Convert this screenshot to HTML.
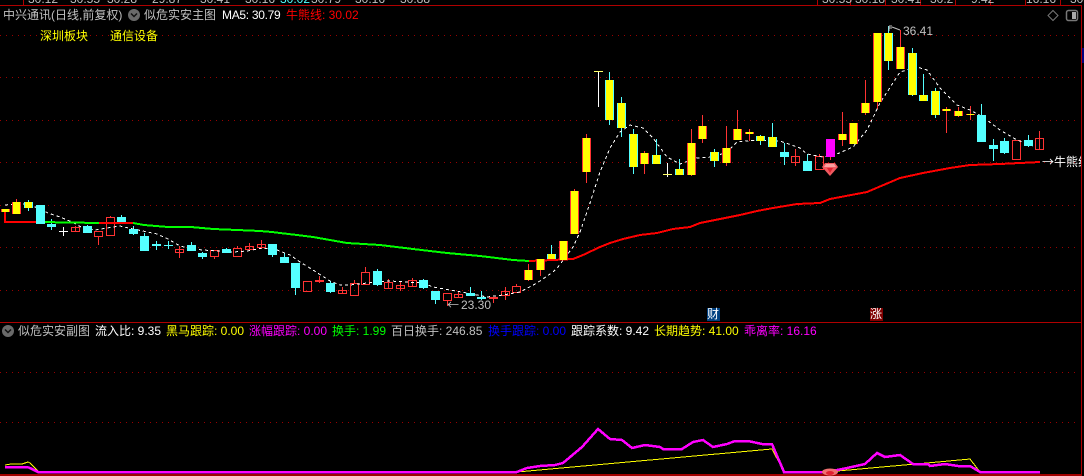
<!DOCTYPE html>
<html><head><meta charset="utf-8"><style>
html,body{margin:0;padding:0;background:#000;width:1084px;height:476px;overflow:hidden}
#w{position:relative;width:1084px;height:476px;overflow:hidden;background:#000;font:12px/14px "Liberation Sans","WenQuanYi Zen Hei","Noto Sans CJK SC",sans-serif}
#w span{position:absolute;white-space:nowrap}
svg{position:absolute;left:0;top:0}
#top{position:absolute;left:0;top:0;width:1084px;height:4px;overflow:hidden;color:#c0c0c0}
#top span{top:-8px}
.g{color:#c0c0c0}.wh{color:#fff}.r{color:#f00}.y{color:#ff0}.m{color:#f0f}.gr{color:#0f0}.b{color:#00f}
.ar{font-family:"WenQuanYi Zen Hei","Noto Sans CJK SC",sans-serif}
</style></head><body><div id="w">
<svg width="1084" height="476" viewBox="0 0 1084 476">
<g stroke="#900" stroke-width="1" stroke-dasharray="1 5" fill="none" shape-rendering="crispEdges">
<path d="M0 35.5H1080M0 77.5H1080M0 120.5H1080M0 162.5H1080M0 205.5H1080M0 247.5H1080M0 290.5H1080M0 372.5H1080M0 422.5H1080"/>
</g>
<g fill="none" shape-rendering="crispEdges">
<path stroke="#b00000" d="M0 5.5H1082M23.5 0V5M817.5 0V5M850.5 0V5M885.5 0V5M920.5 0V5M955.5 0V5M990.5 0V5M1025.5 0V5M1060.5 0V5M1081.5 5V476M0 322.5H1082"/>
<path stroke="#a00000" stroke-width="2" d="M0 475H1082"/>
<path stroke="#ff3333" d="M16.5 199V202M75.5 226V232M98.5 236V245M110.5 216V217M179.5 246V258M214.5 256V259M237.5 246V248M249.5 243V250M261.5 240V249M319.5 276V283M342.5 287V293M354.5 280V283M365.5 267V272M388.5 279V288M400.5 282V291M412.5 278V286M447.5 300V306M458.5 292V297M493.5 297V303M505.5 287V300M516.5 284V286M528.5 264V281M540.5 259V276M574.5 189V191M586.5 134V183M644.5 151V174M691.5 129V176M702.5 115V143M726.5 126V166M737.5 110V130M749.5 129V141M795.5 149V166M819.5 154V156M830.5 157V160M842.5 112V146M865.5 80V115M877.5 102V109M900.5 30V47M946.5 107V133M958.5 107V117M970.5 106V120M1039.5 131V150"/>
<path stroke="#54ffff" d="M28.5 200V211M51.5 219V230M87.5 225V233M121.5 215V217M133.5 226V235M144.5 233V236M156.5 241V250M168.5 241V249M191.5 242V245M202.5 252V259M226.5 248V250M272.5 255V257M284.5 253V257M295.5 288V295M330.5 281V293M377.5 269V286M423.5 279V289M435.5 300V304M470.5 287V296M481.5 291V300M551.5 245V254M609.5 72V125M621.5 97V137M633.5 129V174M656.5 139V155M679.5 159V175M714.5 149V167M760.5 135V145M772.5 123V147M784.5 143V165M807.5 154V161M888.5 26V70M912.5 48V96M923.5 74V101M935.5 88V118M981.5 104V115M993.5 139V161M1004.5 138V154M1028.5 135V147"/>
<path stroke="#fff" d="M63.5 227V236M59 231.5H68M598.5 71V107M667.5 163V177"/>
<path stroke="#ffff66" d="M594 71.5H603M663 174.5H672"/>
<path stroke="#ff3333" d="M71.5 227.5h8V231.5h-8zM94.5 231.5h8V236.5h-8zM106.5 217.5h8V235.5h-8zM175.5 249.5h8V252.5h-8zM210.5 250.5h8V256.5h-8zM233.5 248.5h8V256.5h-8zM245.5 246.5h8V249.5h-8zM257.5 244.5h8V247.5h-8zM303.5 281.5h8V291.5h-8zM338.5 290.5h8V293.5h-8zM350.5 283.5h8V295.5h-8zM361.5 272.5h8V284.5h-8zM384.5 282.5h8V288.5h-8zM396.5 285.5h8V288.5h-8zM408.5 280.5h8V286.5h-8zM443.5 293.5h8V300.5h-8zM454.5 294.5h8V297.5h-8zM501.5 291.5h8V295.5h-8zM512.5 286.5h8V292.5h-8zM791.5 156.5h8V162.5h-8zM815.5 156.5h8V169.5h-8zM1012.5 140.5h8V159.5h-8zM1035.5 138.5h8V149.5h-8z"/>
</g>
<polyline fill="none" stroke="#fff" stroke-dasharray="3 3" shape-rendering="crispEdges" points="5,205 16,204 28,204 40,209 48,213 60,217 72,222 83,228 95,230 107,228 120,226 133,229 143,231 157,234 168,239 180,246 192,249 203,250 217,251 233,252 247,251 263,248 277,250 290,255 300,262 313,270 330,281 340,285 350,285 367,283 390,281 423,283 433,287 450,290 467,293 487,297 503,295 520,292 537,283 553,272 558,267 573,247 580,232 590,203 600,172 610,148 620,132 630,125 643,128 653,138 667,157 680,164 697,158 713,157 727,152 737,142 757,140 780,141 800,148 807,154 823,157 837,154 853,147 867,130 880,103 900,72 917,67 927,70 940,88 957,105 970,110 983,117 1000,130 1017,140 1033,146"/>
<g fill="none" stroke-width="2" shape-rendering="crispEdges">
<polyline stroke="#f00" points="5,212 5,222 28,222 40,222"/>
<polyline stroke="#0f0" points="40,222 99,223"/>
<polyline stroke="#f00" points="99,223 133,223"/>
<polyline stroke="#0f0" points="133,223 144,225 156,226 168,227 191,227 202,228 213,229 237,230 260,231 272,232 280,233 297,235 313,237 330,240 347,243 380,245 413,249 447,253 480,256 513,260 529,261"/>
<polyline stroke="#f00" points="529,261 553,260 573,259 583,255 600,247 610,243 623,239 640,235 657,233 673,229 690,227 700,223 720,219 740,215 757,211 773,208 797,204 820,203 830,199 867,192 900,178 923,173 950,168 970,165 1000,164 1040,162"/>
</g>
<g shape-rendering="crispEdges">
<path fill="#ff3333" d="M1 209h9V212h-9zM12 202h9V214h-9zM524 270h9V280h-9zM536 259h9V270h-9zM559 241h9V260h-9zM570 191h9V234h-9zM582 138h9V172h-9zM640 153h9V164h-9zM687 143h9V175h-9zM698 126h9V139h-9zM722 148h9V163h-9zM733 129h9V140h-9zM745 132h9V134h-9zM838 134h9V140h-9zM849 123h9V144h-9zM861 103h9V113h-9zM873 33h9V102h-9zM896 47h9V69h-9zM942 109h9V111h-9zM954 111h9V116h-9zM966 114h9V115h-9zM315 280h9V282h-9zM489 297h9V299h-9z"/>
<path fill="#54ffff" d="M24 202h9V208h-9zM547 254h9V259h-9zM605 80h9V120h-9zM617 103h9V128h-9zM629 134h9V167h-9zM652 155h9V164h-9zM675 169h9V175h-9zM710 152h9V161h-9zM756 136h9V141h-9zM768 137h9V147h-9zM884 33h9V61h-9zM908 53h9V95h-9zM919 95h9V101h-9zM931 91h9V115h-9zM36 205h9V224h-9zM47 224h9V227h-9zM83 226h9V233h-9zM117 217h9V222h-9zM129 229h9V234h-9zM140 236h9V251h-9zM152 244h9V246h-9zM164 245h9V246h-9zM187 245h9V251h-9zM198 253h9V257h-9zM222 249h9V253h-9zM268 244h9V255h-9zM280 257h9V263h-9zM291 263h9V288h-9zM326 283h9V292h-9zM373 271h9V285h-9zM419 280h9V288h-9zM431 291h9V300h-9zM466 293h9V296h-9zM477 297h9V299h-9zM780 152h9V157h-9zM803 161h9V171h-9zM977 115h9V142h-9zM989 145h9V149h-9zM1000 141h9V153h-9zM1024 140h9V146h-9z"/>
<path fill="#ff0" d="M2 209h7V212h-7zM13 202h7V214h-7zM525 270h7V280h-7zM537 259h7V270h-7zM560 241h7V260h-7zM571 191h7V234h-7zM583 138h7V172h-7zM641 153h7V164h-7zM688 143h7V175h-7zM699 126h7V139h-7zM723 148h7V163h-7zM734 129h7V140h-7zM746 132h7V134h-7zM839 134h7V140h-7zM850 123h7V144h-7zM862 103h7V113h-7zM874 33h7V102h-7zM897 47h7V69h-7zM943 109h7V111h-7zM955 111h7V116h-7zM967 114h7V115h-7zM25 202h7V208h-7zM548 254h7V259h-7zM606 80h7V120h-7zM618 103h7V128h-7zM630 134h7V167h-7zM653 155h7V164h-7zM676 169h7V175h-7zM711 152h7V161h-7zM757 136h7V141h-7zM769 137h7V147h-7zM885 33h7V61h-7zM909 53h7V95h-7zM920 95h7V101h-7zM932 91h7V115h-7z"/>
<rect x="826" y="139" width="9" height="18" fill="#f0f"/>
</g>
<!-- gem upper -->
<polygon points="825,163 835,163 838,167 830,176 822,167" fill="#f05a60"/>
<polygon points="826,164 834,164 836,167 824,167" fill="#f8a0a0"/>
<polygon points="827,168 833,168 830,173" fill="#e02030"/>
<!-- flag near high -->
<path d="M889 26V31M889 26H892M889 28H892M892 27L900 30" stroke="#c0c0c0" fill="none"/>
<path d="M1053 10.5L1058 15.5L1053 20.5L1048 15.5Z" fill="none" stroke="#777" stroke-width="1"/>
<rect x="1066.5" y="10.5" width="11" height="10" rx="2" fill="none" stroke="#777" stroke-width="1.5"/>
<rect x="1072" y="12" width="4" height="7" fill="#aaa"/>
<circle cx="134" cy="15" r="6" fill="#6a6a6a"/><path d="M131 13.5L134 16.5L137 13.5" stroke="#111" fill="none" stroke-width="1.5"/>
<circle cx="8" cy="331" r="6" fill="#6a6a6a"/><path d="M5 329.5L8 332.5L11 329.5" stroke="#111" fill="none" stroke-width="1.5"/>
<rect x="707" y="308" width="13" height="13" fill="#004080"/>
<rect x="870" y="308" width="13" height="13" fill="#800000"/>
<rect x="1082" y="48" width="2" height="15" fill="#000080"/>
<!-- lower panel -->
<g fill="none" shape-rendering="crispEdges">
<polyline stroke="#ff0" points="5,465 11,464 22,464 28,462 30,463 38,471"/>
<polyline stroke="#ff0" points="517,472 772,449 784,472"/>
<polyline stroke="#ff0" points="837,471 860,469 893,466 927,463 970,459 980,472"/>
<polyline stroke="#f0f" stroke-width="2.5" points="5,467 27,467 30,468 38,472 517,472 527,468 540,466 555,465 563,463 582,447 598,429 610,439 622,440 632,448 645,445 660,447 663,449 682,449 693,442 703,440 713,447 727,444 735,441 748,441 762,444 772,444 784,472 823,472 837,470 847,468 865,464 877,453 885,457 900,455 913,464 928,464 930,466 945,464 958,466 970,466 980,472 1040,472"/>
</g>
<ellipse cx="830" cy="472" rx="8" ry="3.5" fill="#f07070"/><ellipse cx="830" cy="473" rx="4" ry="2" fill="#e02030"/>
</svg>
<div id="top"><span style="left:28px">30.12</span><span style="left:70px">30.55</span><span style="left:107px">30.28</span><span style="left:152px">29.87</span><span style="left:200px">30.41</span><span style="left:245px">30.16</span><span style="left:280px;color:#54ffff">30.02</span><span style="left:311px">30.79</span><span style="left:355px">30.16</span><span style="left:400px">30.88</span><span style="left:822px">30.55</span><span style="left:855px">30.18</span><span style="left:891px">30.41</span><span style="left:930px">30.2</span><span style="left:971px">9.42</span><span style="left:1026px">16.16</span><span style="left:1070px">30.2</span></div>
<span class="g" style="left:3px;top:8px">中兴通讯(日线,前复权)</span>
<span class="g" style="left:144px;top:8px">似危实安主图</span>
<span class="wh" style="left:222px;top:8px;letter-spacing:-.3px">MA5: 30.79</span>
<span class="r" style="left:286px;top:8px">牛熊线: 30.02</span>
<span class="y" style="left:40px;top:29px">深圳板块</span>
<span class="y" style="left:110px;top:29px">通信设备</span>
<span class="g" style="left:903px;top:24px">36.41</span>
<span class="g ar" style="left:447px;top:298px">←</span>
<span class="g" style="left:461px;top:298px">23.30</span>
<span class="wh ar" style="left:1042px;top:155px">→</span>
<span class="wh" style="left:1054px;top:155px;width:27px;overflow:hidden">牛熊线</span>
<span class="wh" style="left:707px;top:307px">财</span>
<span class="wh" style="left:870px;top:307px">涨</span>
<span class="g" style="left:18px;top:324px">似危实安副图</span>
<span class="wh" style="left:95px;top:324px">流入比: 9.35</span>
<span class="y" style="left:166px;top:324px">黑马跟踪: 0.00</span>
<span class="m" style="left:249px;top:324px">涨幅跟踪: 0.00</span>
<span class="gr" style="left:332px;top:324px">换手: 1.99</span>
<span class="g" style="left:391px;top:324px">百日换手: 246.85</span>
<span class="b" style="left:488px;top:324px">换手跟踪: 0.00</span>
<span class="wh" style="left:571px;top:324px">跟踪系数: 9.42</span>
<span class="y" style="left:654px;top:324px">长期趋势: 41.00</span>
<span class="m" style="left:744px;top:324px">乖离率: 16.16</span>
</div></body></html>
